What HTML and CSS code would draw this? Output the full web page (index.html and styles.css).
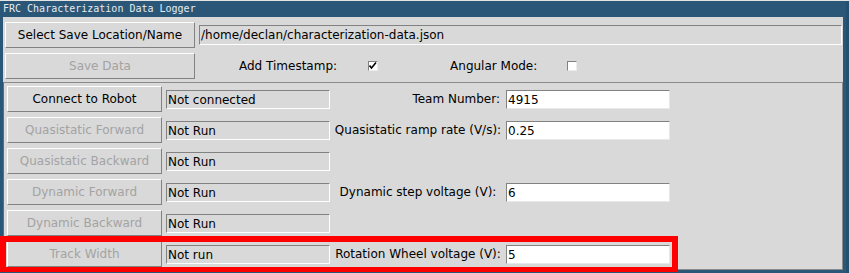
FILE: index.html
```html
<!DOCTYPE html>
<html lang="en">
<head>
    <meta charset="UTF-8">
    <title>FRC Characterization Data Logger</title>
    <link rel="stylesheet" href="styles.css">
</head>
<body>

    <div class="window">
        <div class="titlebar">FRC Characterization Data Logger</div>

        <div class="client">
            <div class="top-frame">
                <div class="row">
                    <button class="btn wide">Select Save Location/Name</button>
                    <div class="entry path">/home/declan/characterization-data.json</div>
                </div>
                <div class="row">
                    <button class="btn wide" disabled>Save Data</button>
                    <span class="check-label timestamp">Add Timestamp:</span>
                    <span class="check">
                        <svg width="8" height="8" viewBox="0 0 8 8">
                            <path d="M0.5 3.5 L2.5 6 L7 0.5" fill="none" stroke="#000" stroke-width="1.6"/>
                        </svg>
                    </span>
                    <span class="check-label angular">Angular Mode:</span>
                    <span class="check"></span>
                </div>
            </div>

            <div class="control-frame">
                <button class="btn">Connect to Robot</button>
                <div class="status">Not connected</div>
                <div class="param right">Team Number:</div>
                <div class="entry value">4915</div>

                <button class="btn" disabled>Quasistatic Forward</button>
                <div class="status">Not Run</div>
                <div class="param">Quasistatic ramp rate (V/s):</div>
                <div class="entry value">0.25</div>

                <button class="btn" disabled>Quasistatic Backward</button>
                <div class="status">Not Run</div>
                <div class="param"></div>
                <div></div>

                <button class="btn" disabled>Dynamic Forward</button>
                <div class="status">Not Run</div>
                <div class="param">Dynamic step voltage (V):</div>
                <div class="entry value">6</div>

                <button class="btn" disabled>Dynamic Backward</button>
                <div class="status">Not Run</div>
                <div class="param"></div>
                <div></div>

                <button class="btn" disabled>Track Width</button>
                <div class="status">Not run</div>
                <div class="param">Rotation Wheel voltage (V):</div>
                <div class="entry value">5</div>
            </div>
        </div>

        <!-- annotation drawn over the screenshot -->
        <div class="highlight"></div>
    </div>

</body>
</html>
```

FILE: styles.css
```css
body {
    margin: 0;
    background: linear-gradient(#e4e4e4 0 1px, #24506f 1px);
    height: 273px;
    overflow: hidden;
    font-family: 'DejaVu Sans', sans-serif;
    font-size: 12px;
    color: #000;
}
.window {
    position: relative;
    width: 846px;
    height: 272px;
    margin-top: 1px;
    background-color: #2a5678;
    padding: 0 3px 3px 3px;
    box-sizing: border-box;
    display: flex;
    flex-direction: column;
}
.titlebar {
    height: 16px;
    line-height: 16px;
    margin: 0 -3px;
    padding-left: 3px;
    font-family: 'DejaVu Sans Mono', monospace;
    font-size: 10px;
    color: #e6ebf0;
    white-space: nowrap;
}
.client {
    flex: 1;
    background-color: #d9d9d9;
    display: flex;
    flex-direction: column;
}

/* top part: save location + options */
.top-frame {
    padding: 5px 1px 3px 2px;
    display: flex;
    flex-direction: column;
    gap: 5px;
}
.row {
    display: flex;
    align-items: center;
}
.btn {
    font-family: 'DejaVu Sans', sans-serif;
    font-size: 12px;
    color: #000;
    background-color: #d9d9d9;
    border: 1px solid;
    border-color: #ffffff #828282 #828282 #ffffff;
    padding: 0;
    margin: 0;
    height: 26px;
    text-align: center;
}
.btn:disabled {
    color: #a3a3a3;
}
.btn.wide {
    width: 190px;
}
.entry {
    background-color: #ffffff;
    border: 1px solid;
    border-color: #828282 #e8e8e8 #e8e8e8 #828282;
    height: 19px;
    line-height: 18px;
    padding-left: 1px;
    box-sizing: border-box;
    white-space: nowrap;
}
.entry.path {
    flex: 1;
    margin-left: 4px;
    background-color: #d9d9d9;
    border-color: #828282 #ffffff #ffffff #828282;
    height: 20px;
}
.check-label {
    margin-left: 44px;
}
.check-label.angular {
    margin-left: 72px;
}
.check {
    width: 10px;
    height: 10px;
    box-sizing: border-box;
    margin-left: 31px;
    background-color: #ffffff;
    border: 1px solid;
    border-color: #828282 #ececec #ececec #828282;
    display: flex;
    align-items: center;
    justify-content: center;
}
.check:last-child {
    margin-left: 30px;
}

/* lower part: test buttons and parameters */
.control-frame {
    flex: 1;
    border: 1px solid;
    border-color: #8a8a8a #8a8a8a #8a8a8a #6a6a6a;
    padding: 3px 0 0 3px;
    display: grid;
    grid-template-columns: 155px 164px 168px 164px;
    grid-auto-rows: 26px;
    column-gap: 4px;
    row-gap: 5px;
    align-items: center;
}
.status {
    height: 19px;
    line-height: 18px;
    padding-left: 1px;
    box-sizing: border-box;
    border: 1px solid;
    border-color: #828282 #ffffff #ffffff #828282;
    white-space: nowrap;
}
.param {
    margin-left: -2px;
    margin-right: -2px;
    text-align: center;
    white-space: nowrap;
}
.param.right {
    text-align: right;
    padding-right: 4px;
}

.highlight {
    position: absolute;
    left: 0;
    top: 235px;
    width: 678px;
    height: 36px;
    border: 6px solid #ff0000;
    border-bottom-width: 5px;
    box-sizing: border-box;
}
```
